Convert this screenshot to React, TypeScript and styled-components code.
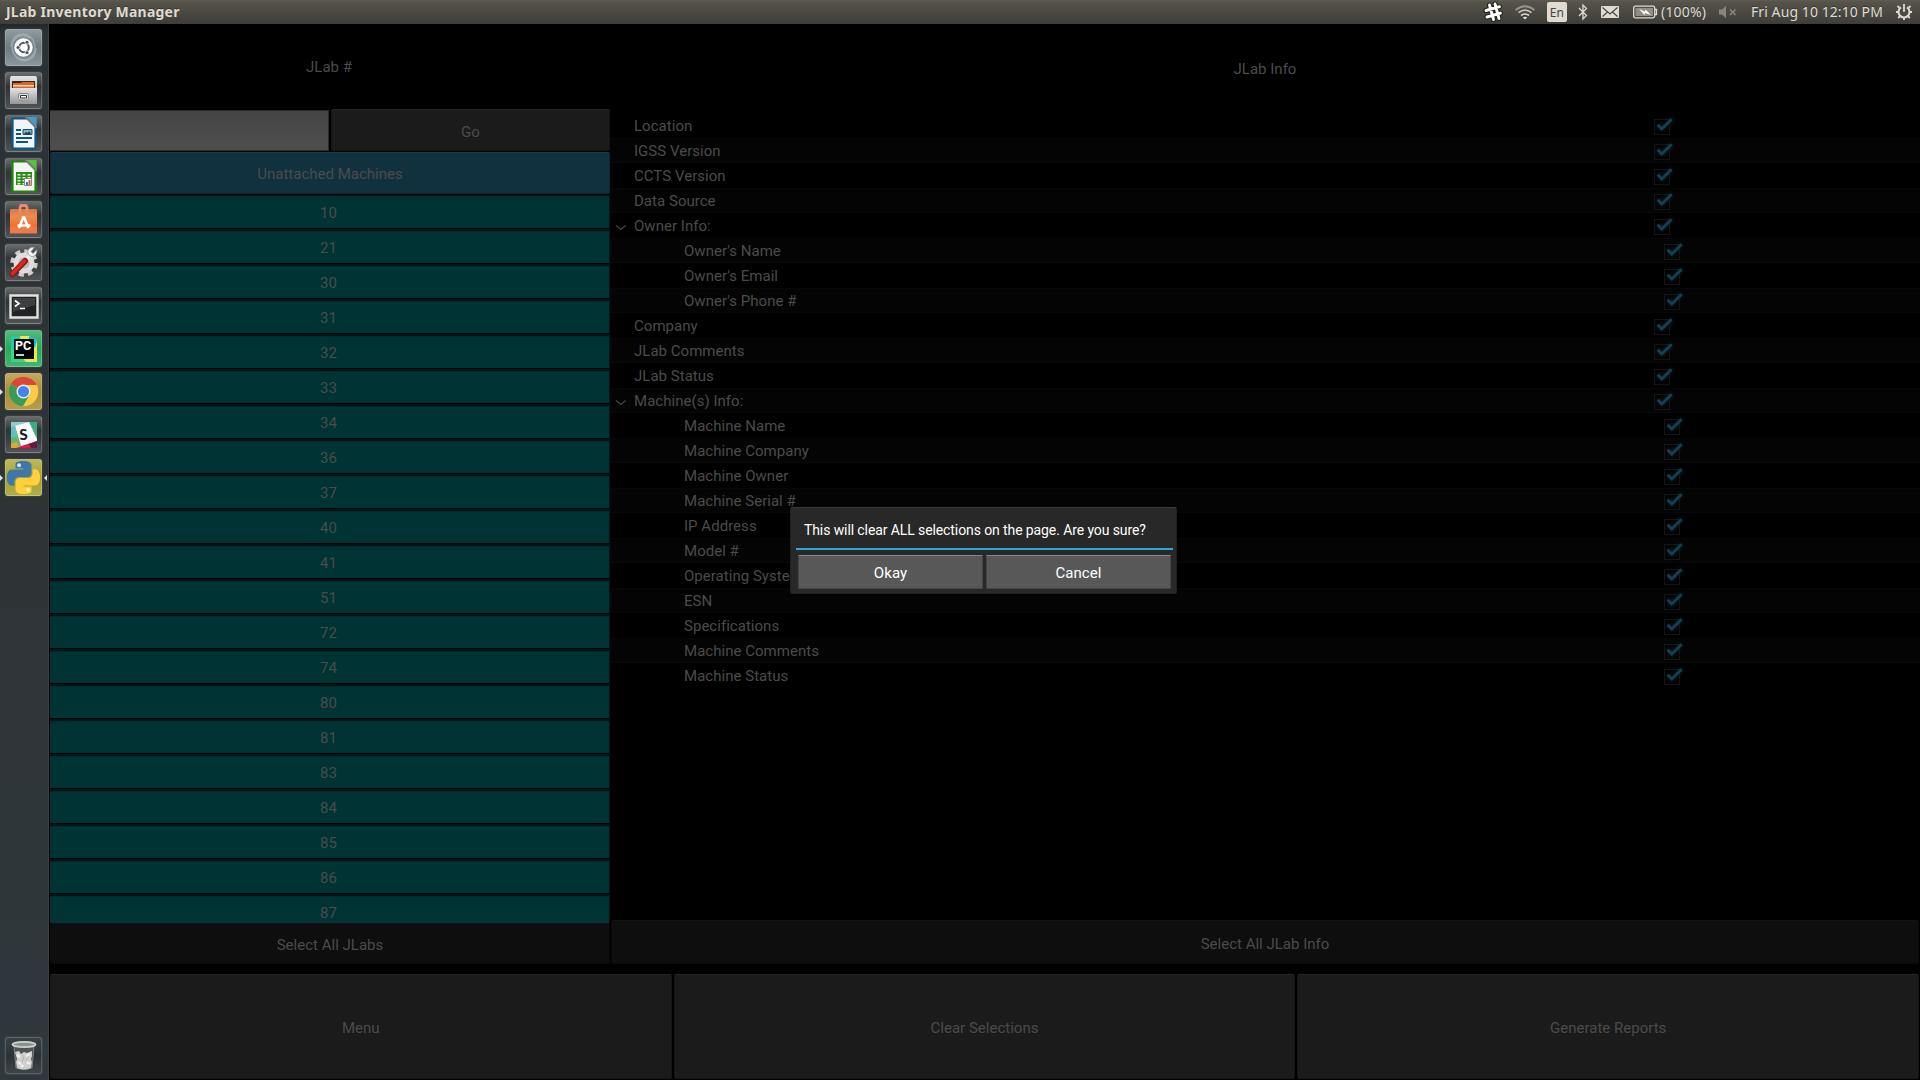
import React from "react";
import styled, { createGlobalStyle } from "styled-components";

const GlobalStyle = createGlobalStyle`
  * { box-sizing: border-box; }
  html, body { margin: 0; background: #000; overflow: hidden; }
`;

const Screen = styled.div`
  position: relative;
  width: 1920px;
  height: 1080px;
  display: flex;
  flex-direction: column;
  overflow: hidden;
  background: #000;
  color: #4b4b4b;
  font: 15px/20px Roboto, "Liberation Sans", sans-serif;
  letter-spacing: 0.01px;
`;

const TopBar = styled.header`
  height: 24px;
  flex: none;
  display: flex;
  align-items: center;
  padding: 0 8px 0 6px;
  background: linear-gradient(#5f5d51 0, #55534a 2px, #3e3d38 100%);
  color: #dfdbd2;
  font-family: "Noto Sans", "Open Sans", sans-serif;
  text-shadow: 0 -1px 0 rgba(0, 0, 0, 0.3);
`;

const WindowTitle = styled.div`
  width: 300px;
  margin-right: auto;
  font-size: 14px;
  font-weight: 700;
  letter-spacing: 0.23px;
  white-space: nowrap;
`;

const Indicator = styled.div<{ $w: number; $gap?: number }>`
  width: ${(p) => p.$w}px;
  margin-right: ${(p) => p.$gap ?? 0}px;
  height: 24px;
  display: flex;
  align-items: center;
  white-space: nowrap;
  font-size: 14px;
  letter-spacing: ${(p) => (p.$w > 100 ? "0.08px" : "0.2px")};
  svg { display: block; flex: none; }
`;

const LangBox = styled.span`
  width: 20px;
  height: 20px;
  border-radius: 2px;
  background: #dfdbd2;
  color: #45443e;
  text-shadow: none;
  font-size: 12px;
  line-height: 21px;
  text-align: center;
`;

const Main = styled.div`
  flex: 1;
  min-height: 0;
  display: flex;
`;

const Dock = styled.nav`
  width: 49px;
  flex: none;
  margin-right: 1px;
  display: flex;
  flex-direction: column;
  align-items: center;
  gap: 5px;
  padding: 5px 1px 5px 0;
  border-right: 1px solid #3b4043;
  background: linear-gradient(#22272a 0, #2c3134 8px, #2e3336 50%, #2f383d 100%);
`;

const DockSlot = styled.div<{ $last?: boolean }>`
  width: 47px;
  height: 38px;
  padding-bottom: 1px;
  flex: none;
  display: flex;
  align-items: center;
  justify-content: space-between;
  margin-top: ${(p) => (p.$last ? "auto" : "0")};
`;

const Pip = styled.span<{ $side: "left" | "right"; $on?: boolean }>`
  width: 4px;
  height: 0;
  border: 3px solid transparent;
  border-${(p) => (p.$side === "left" ? "left" : "right")}-color: ${(p) => (p.$on ? "#dfe2e3" : "transparent")};
  border-${(p) => (p.$side === "left" ? "right" : "left")}-width: 0;
`;

const Tile = styled.div<{ $bg?: string }>`
  width: 37px;
  height: 37px;
  border-radius: 3px;
  border: 1px solid rgba(255, 255, 255, 0.17);
  box-shadow: 0 0 1px 1px rgba(120, 135, 145, 0.16);
  background: ${(p) => p.$bg ?? "linear-gradient(#686b6c, #303436 38%, #3b3f42 65%, #505456)"};
  display: flex;
  align-items: center;
  justify-content: center;
  svg { display: block; flex: none; }
`;

const AppArea = styled.main`
  flex: 1;
  min-width: 0;
  display: flex;
  flex-direction: column;
`;

const Panels = styled.div`
  height: 940px;
  display: flex;
`;

const LabColumn = styled.section`
  width: 560px;
  flex: none;
  display: flex;
  flex-direction: column;
`;

const PanelTitle = styled.h2<{ $h: number }>`
  height: ${(p) => p.$h}px;
  flex: none;
  margin: 0;
  font: inherit;
  text-align: center;
  line-height: ${(p) => p.$h + 1}px;
  padding-right: ${(p) => (p.$h > 86 ? 0 : 2)}px;
`;

const SearchRow = styled.div`
  height: 43px;
  flex: none;
  display: flex;
  gap: 2px;
  padding-bottom: 1px;
`;

const SearchInput = styled.input`
  flex: none;
  width: 279px;
  height: 41px;
  margin-top: 1px;
  border: 1px solid #2c2c2c;
  border-left: 0;
  border-radius: 0 1px 1px 0;
  outline: 0;
  background: linear-gradient(#454545, #4e4e4e);
  color: #aaa;
`;

const Button = styled.button<{ $tone?: "normal" | "dim" | "blue"; $drop?: number }>`
  flex: 1;
  min-width: 0;
  padding: ${(p) => p.$drop ?? 2}px 0 0;
  border: 1px solid ${(p) => (p.$tone === "dim" ? "#0a0a0a" : p.$tone === "blue" ? "#0d2632" : "#151515")};
  border-top-color: ${(p) => (p.$tone === "dim" ? "#131313" : p.$tone === "blue" ? "#1b3947" : "#262626")};
  border-radius: 2px;
  background: ${(p) => (p.$tone === "dim" ? "#0e0e0e" : p.$tone === "blue" ? "#12313f" : "#1b1b1b")};
  color: inherit;
  font: inherit;
  letter-spacing: inherit;
`;

const UnattachedRow = styled.div`
  height: 42px;
  flex: none;
  display: flex;
`;

const LabList = styled.div`
  height: 729px;
  flex: none;
  overflow: hidden;
  padding-top: 1px;
`;

const LabItem = styled.div`
  height: 35px;
  border: 1px solid #001616;
  border-left: 0;
  background: #003333;
  box-shadow: inset 0 -1px #000, inset 0 1px #002b2b;
  text-align: center;
  line-height: 35px;
  padding-right: 2px;
`;

const SelectRow = styled.div`
  height: 41px;
  flex: none;
  display: flex;
`;

const InfoColumn = styled.section`
  flex: 1;
  display: flex;
  flex-direction: column;
`;

const Tree = styled.ul`
  height: 807px;
  flex: none;
  margin: 0;
  padding: 0;
  list-style: none;
`;

const TreeRow = styled.li<{ $nested?: boolean }>`
  height: 25px;
  display: grid;
  grid-template-columns: ${(p) => (p.$nested ? "74px 980px 20px" : "24px 1020px 20px")};
  align-items: center;
  &:nth-child(even) { background: #040404; box-shadow: inset 0 1px #070707, inset 0 -1px #070707; }
  svg { display: block; }
`;

const TreeLabel = styled.span`
  padding-top: 1px;
  letter-spacing: 0.03px;
`;

const CheckBox = styled.span`
  width: 16px;
  height: 16px;
  margin-top: 3px;
  border: 1px solid #151515;
  svg { margin: -5px 0 0 -4px; filter: drop-shadow(0 0 2px #0c2835); }
`;

const InfoFooter = styled.div`
  height: 44px;
  margin-left: 1px;
  display: flex;
  padding-right: 1px;
`;

const Footer = styled.footer`
  height: 105px;
  margin-top: 10px;
  display: flex;
  gap: 2px;
  padding-right: 1px;
`;

const Dialog = styled.div`
  position: absolute;
  left: 790px;
  top: 507px;
  width: 387px;
  height: 87px;
  display: flex;
  flex-direction: column;
  border-radius: 2px;
  border: 1px solid #1f1f1f;
  border-top-color: #3a3a3a;
  background: #282828;
  color: #fff;
`;

const DialogTitle = styled.div`
  height: 42px;
  flex: none;
  margin: 0 3px 0 5px;
  padding: 11px 0 0 8px;
  border-bottom: 2px solid #2fa7d4;
  font-size: 14px;
  line-height: 22px;
  letter-spacing: -0.1px;
  white-space: nowrap;
`;

const DialogActions = styled.div`
  display: flex;
  gap: 3px;
  padding: 5px 5px 0 7px;
`;

const DialogButton = styled.button`
  flex: 1;
  height: 34px;
  padding: 2px 0 0;
  border: 1px solid #454545;
  border-top-color: #868686;
  border-radius: 1px;
  background: #585858;
  color: #fff;
  font: inherit;
  letter-spacing: 0.05px;
`;

const labs = [10, 21, 30, 31, 32, 33, 34, 36, 37, 40, 41, 51, 72, 74, 80, 81, 83, 84, 85, 86, 87];

type Node = { label: string; nested?: boolean; open?: boolean };
const n = (label: string): Node => ({ label, nested: true });
const tree: Node[] = [
  { label: "Location" },
  { label: "IGSS Version" },
  { label: "CCTS Version" },
  { label: "Data Source" },
  { label: "Owner Info:", open: true },
  n("Owner's Name"),
  n("Owner's Email"),
  n("Owner's Phone #"),
  { label: "Company" },
  { label: "JLab Comments" },
  { label: "JLab Status" },
  { label: "Machine(s) Info:", open: true },
  n("Machine Name"),
  n("Machine Company"),
  n("Machine Owner"),
  n("Machine Serial #"),
  n("IP Address"),
  n("Model #"),
  n("Operating System"),
  n("ESN"),
  n("Specifications"),
  n("Machine Comments"),
  n("Machine Status"),
];

const Check = () => (
  <svg width="24" height="20" viewBox="0 0 24 20">
    <path d="M6.600 9.800l4.200 4.200L20.600 4.300" fill="none" stroke="#153f52" strokeWidth="2.900" />
  </svg>
);

const Chevron = () => (
  <svg width="24" height="16" viewBox="0 0 24 16">
    <path d="M6 7.500l4.800 4 4.800-4" fill="none" stroke="#454545" strokeWidth="1.200" />
  </svg>
);

/* ---------- launcher icons ---------- */

const Ubuntu = () => (
  <svg width="35" height="35" viewBox="0 0 35 35">
    <g fill="none" stroke="#bcc5c8" strokeWidth="1.6" opacity=".5">
      <path d="M8 24C1 11 14 0 24 8M27 11c7 13-6 24-16 16M5 17C6 3 20 0 28 11M30 18c-1 14-15 17-22 6" />
    </g>
    <circle cx="17.500" cy="17.500" r="9.200" fill="#fff" />
    <circle cx="18" cy="17.500" r="4.800" fill="none" stroke="#4d565a" strokeWidth="2" />
    <g fill="#4d565a" stroke="#fff" strokeWidth=".8">
      <circle cx="12" cy="17.500" r="2" />
      <circle cx="21" cy="12.300" r="2" />
      <circle cx="21" cy="22.700" r="2" />
    </g>
  </svg>
);

const Files = () => (
  <svg width="35" height="35" viewBox="0 0 35 35">
    <defs>
      <linearGradient id="cab" x2="0" y2="1"><stop stopColor="#e4e4e4" /><stop offset="1" stopColor="#969696" /></linearGradient>
    </defs>
    <path d="M5 3h25l1 2v26H4V5z" fill="url(#cab)" />
    <path d="M6 8h23v8H6z" fill="#3a2620" />
    <path d="M7 10h8l1-1h12v7H7z" fill="#d9652c" />
    <path d="M7 12h21v1.500H7z" fill="#f8d7a8" />
    <path d="M4 15h27v16H4z" fill="url(#cab)" />
    <rect x="12.500" y="20.500" width="10" height="6.500" rx="1.500" fill="#ddd" stroke="#888" />
    <path d="M14.500 22.500h6v2.500h-6z" fill="#fff" stroke="#333" />
  </svg>
);

const Doc = ({ dark, light, children }: { dark: string; light: string; children: React.ReactNode }) => (
  <svg width="35" height="35" viewBox="0 0 35 35">
    <path d="M6.500 2.500h16l7 8v22h-23z" fill="#f4f4f4" stroke={dark} strokeWidth="2.200" strokeLinejoin="round" />
    <path d="M20 1h10.600v11z" fill={light} />
    <path d="M19.500 1l11 11" stroke="#777" strokeWidth="2" />
    {children}
  </svg>
);

const Writer = () => (
  <Doc dark="#07558a" light="#3e9bd4">
    <path d="M10 14h5M10 18h5M10 22h16M10 26h12" stroke="#075589" strokeWidth="2" />
    <path d="M17 13.500h9v5h-9z" fill="#67b6e5" stroke="#174d77" />
    <path d="M18 18l2-2 2 1 1-2 2 3z" fill="#333" />
  </Doc>
);

const Calc = () => (
  <Doc dark="#23850b" light="#54c33a">
    <path d="M10 13h16v13H10z" fill="#2a8c18" />
    <path d="M11.500 15h3v1.500h-3zm5 0h3v1.500h-3zm5 0h3v1.500h-3zm-10 3h3v1.500h-3zm5 0h3v1.500h-3zm5 0h3v1.500h-3zm-10 3h3v1.500h-3zm5 0h3v1.500h-3zm-5 3h3v1.500h-3zm5 0h2v1.500h-2z" fill="#e5f3df" />
    <path d="M18.500 19.500h7v7h-7z" fill="#fff" stroke="#888" />
    <path d="M20 23h2v3h-2z" fill="#1788cf" />
    <path d="M22.500 21h2v5h-2z" fill="#e6552a" />
  </Doc>
);

const Store = () => (
  <svg width="35" height="35" viewBox="0 0 35 35">
    <defs><linearGradient id="bag" x2="0" y2="1"><stop stopColor="#d9744c" /><stop offset=".3" stopColor="#ec8b50" /><stop offset=".7" stopColor="#f1702d" /><stop offset=".75" stopColor="#ee7b45" /></linearGradient></defs>
    <path d="M4 8l1-1h25l1 1v23.500H4z" fill="url(#bag)" />
    <path d="M14 11V5.500l1-2h5l1 2V11" fill="none" stroke="#ee8a68" strokeWidth="2.800" />
    <path d="M13 26l4.200-10.500h1L22.400 26M11.500 23.500h13" fill="none" stroke="#fff" strokeWidth="2.600" />
  </svg>
);

const Settings = () => (
  <svg width="35" height="35" viewBox="0 0 35 35">
    <circle cx="18" cy="18" r="11.500" fill="none" stroke="#cfcfcf" strokeWidth="4.500" strokeDasharray="5.030 4" />
    <circle cx="18" cy="18" r="8" fill="#b9b9b9" stroke="#dedede" strokeWidth="5" />
    <path d="M17 19l8-9" stroke="#eee" strokeWidth="4" />
    <path d="M31 4.500l-4 4-2-2 3.500-4c-5-1-8 3-6 7 3 4 9 2 8.500-5z" fill="#f3f3f3" stroke="#888" strokeWidth=".7" />
    <path d="M6.500 29L19 16" stroke="#8d1412" strokeWidth="6" strokeLinecap="round" />
    <path d="M6.500 28.500L18.500 16" stroke="#d62a20" strokeWidth="3.700" strokeLinecap="round" />
  </svg>
);

const Terminal = () => (
  <svg width="35" height="35" viewBox="0 0 35 35">
    <path d="M4.500 7.500h27v22h-27z" fill="#202323" stroke="#e2e2e2" strokeWidth="2.400" />
    <path d="M7 10h22v7L7 24z" fill="#3b3f3f" />
    <path d="M9 12.500l4 3-4 3M14 20.500h5" fill="none" stroke="#fff" strokeWidth="1.700" />
  </svg>
);

const PyCharm = () => (
  <svg width="35" height="35" viewBox="0 0 35 35">
    <path d="M5 5h18l8 4v22H5z" fill="#1bcfa0" />
    <path d="M14 5h9l8 4v22H18z" fill="#e9e84c" />
    <path d="M23 5l4 1 4 3-2 8-6-7z" fill="#16b9df" />
    <path d="M5 16v15h15z" fill="#35d982" />
    <path d="M8 8h20v20H8z" fill="#050505" />
    <text x="9" y="18.500" fill="#fff" fontFamily="Roboto, sans-serif" fontWeight="700" fontSize="12.500" letterSpacing="0">PC</text>
    <path d="M10 24h8" stroke="#fff" strokeWidth="1.600" />
  </svg>
);

const Chrome = () => (
  <svg width="35" height="35" viewBox="0 0 35 35">
    <circle cx="17.500" cy="17.500" r="14.800" fill="#fbcb45" />
    <path d="M17.500 17.500L4.700 10.100A14.800 14.800 0 0 1 30.800 11H17.500z" fill="#dc4739" />
    <path d="M4.700 10.100A14.800 14.800 0 0 0 17 32.300l6.400-11.400-5.900-3.400z" fill="#3b9a55" />
    <circle cx="17.500" cy="17.500" r="7" fill="#f2f0e6" />
    <circle cx="17.500" cy="17.500" r="5.600" fill="#4283ee" />
  </svg>
);

const Slack = () => (
  <svg width="35" height="35" viewBox="0 0 35 35">
    <path d="M5 5h26v26H5z" fill="#fff" />
    <path d="M5 5h18L5 10z" fill="#8ccdc9" />
    <path d="M23 5h8v17z" fill="#39ad83" />
    <path d="M5 10l4-1 6 20-6 2H5z" fill="#69b56e" />
    <path d="M5 10l4-1 3 10-7 2z" fill="#63bfc2" />
    <path d="M9 31l22-7v7z" fill="#df174b" />
    <path d="M5 27l6-2 2 5-4 1H5z" fill="#e2a82d" />
    <path d="M23 27l8-3v7h-6z" fill="#641b3b" />
    <text x="13.500" y="23" fill="#1d1d1d" fontFamily="Lato, sans-serif" fontWeight="900" fontSize="15" letterSpacing="0" transform="rotate(-4 18 18)">S</text>
  </svg>
);

const pyHalf =
  "M14.25.18l.9.2.73.26.59.3.45.32.34.34.25.34.16.33.1.3.04.26.02.2-.01.13V8.5l-.05.63-.13.55-.21.46-.26.38-.3.31-.33.25-.35.19-.35.14-.33.1-.3.07-.26.04-.21.02H8.77l-.69.05-.59.14-.5.22-.41.27-.33.32-.27.35-.2.36-.15.37-.1.35-.07.32-.04.27-.02.21v3.06H3.17l-.21-.03-.28-.07-.32-.12-.35-.18-.36-.26-.36-.36-.35-.46-.32-.59-.28-.73-.21-.88-.14-1.05-.05-1.23.06-1.22.16-1.04.24-.87.32-.71.36-.57.4-.44.42-.33.42-.24.4-.16.36-.1.32-.05.24-.01h.16l.06.01h8.16v-.83H6.18l-.01-2.75-.02-.37.05-.34.11-.31.17-.28.25-.26.31-.23.38-.2.44-.18.51-.15.58-.12.64-.1.71-.06.77-.04.84-.02 1.27.05z";

const Python = () => (
  <svg width="33" height="33" viewBox="0 0 24 24">
    <path d={pyHalf} fill="#3c78a9" />
    <path d={pyHalf} fill="#ffd03c" transform="rotate(180 12 12)" />
    <circle cx="8.800" cy="3.100" r="1.400" fill="#dce8f0" />
    <circle cx="15.200" cy="20.900" r="1.400" fill="#fff3bd" />
  </svg>
);

const Trash = () => (
  <svg width="35" height="35" viewBox="0 0 35 35">
    <path d="M8 8h20l-2 22q-8 3-16 0z" fill="#4e5457" stroke="#7c8284" />
    <path d="M9 14l4-1 2 3 3-2 3 1 5-2v5l-1 3 1 3-1 6q-7 3-14 0l-1-6 1-3z" fill="#cfd0ce" />
    <path d="M11 17l3 2M20 18l4-2M12 24l3 2M21 24l3 2M15 29l2-2" fill="none" stroke="#f0f0ee" strokeWidth="2.500" />
    <path d="M16 17l2 3-2 4M22 20l-2 3" fill="none" stroke="#b4b6b4" strokeWidth="1" />
    <ellipse cx="18" cy="6.500" rx="11.500" ry="2.600" fill="#8b908e" stroke="#cfd3cf" strokeWidth="1.800" />
  </svg>
);

type App = { icon: () => React.JSX.Element; bg?: string; running?: boolean; focused?: boolean };
const launcher: App[] = [
  { icon: Ubuntu, bg: "linear-gradient(#8f9b9f,#6e7c82 50%,#89969c)" },
  { icon: Files },
  { icon: Writer },
  { icon: Calc },
  { icon: Store },
  { icon: Settings },
  { icon: Terminal },
  { icon: PyCharm, bg: "linear-gradient(#55ba7a,#2ca65e 50%,#43b572)", running: true },
  { icon: Chrome, bg: "linear-gradient(#c2a95f,#a58d3b 50%,#b59d4e)", running: true },
  { icon: Slack },
  { icon: Python, bg: "linear-gradient(#bdb95b,#a3a036 50%,#b0ad46)", running: true, focused: true },
];

/* ---------- status indicators ---------- */

const SlackTray = () => (
  <svg width="20" height="22" viewBox="0 0 20 22">
    <g fill="none" strokeLinecap="round">
      <path d="M6.500 4l4 14.500M12 3l4 14.500M3 9.500l13.500-3.800M4 16l13.500-3.800" stroke="#1f1f1c" strokeWidth="5" />
      <path d="M6.500 4l4 14.500M12 3l4 14.500M3 9.500l13.500-3.800M4 16l13.500-3.800" stroke="#fff" strokeWidth="2.900" />
    </g>
  </svg>
);
const Wifi = () => (
  <svg width="20" height="16" viewBox="0 0 20 16">
    <g fill="none" strokeWidth="1.700">
      <path d="M.5 6q9.500-7.500 19 0" stroke="#97948b" />
      <path d="M3.500 8.700q6.500-5 13 0" stroke="#c8c5bc" />
      <path d="M6 11.500q4-3 8 0" stroke="#dfdbd2" />
    </g>
    <path d="M7.800 13.500q2.200-1.600 4.400 0L10 15.500z" fill="#dfdbd2" />
  </svg>
);
const Bluetooth = () => (
  <svg width="10" height="18" viewBox="0 0 10 18">
    <path d="M1 5l7.500 7.500L5 16V2l3.500 3.500L1 13" fill="none" stroke="#dfdbd2" strokeWidth="1.300" />
  </svg>
);
const Mail = () => (
  <svg width="18" height="12" viewBox="0 0 18 12">
    <rect width="18" height="12" rx="1" fill="#dfdbd2" />
    <path d="M1.500 1.500L9 8l7.500-6.500M1.500 10.500l5-4.500M16.500 10.500l-5-4.500" fill="none" stroke="#4a4943" strokeWidth="1.200" />
  </svg>
);
const Battery = () => (
  <svg width="25" height="14" viewBox="0 0 25 14">
    <rect x=".7" y="1.200" width="21" height="11.600" rx="1.800" fill="none" stroke="#dfdbd2" strokeWidth="1.300" />
    <path d="M22 4.500h1.500v5H22" fill="none" stroke="#dfdbd2" strokeWidth="1.300" />
    <path d="M2.500 3h17.500v8H2.500z" fill="#8f8d84" />
    <path d="M6 4l6 2.500.5-2L18 10l-6-2-.5 2z" fill="#fff" />
  </svg>
);
const Muted = () => (
  <svg width="18" height="12" viewBox="0 0 18 12">
    <path d="M0 3.500h3L7 0v12L3 8.500H0z" fill="#88867e" />
    <path d="M11 3.500l5.500 5.500M16.500 3.500L11 9" stroke="#88867e" strokeWidth="1.600" />
  </svg>
);
const Power = () => (
  <svg width="18" height="18" viewBox="0 0 18 18">
    <path d="M6 4.300a5.500 5.500 0 1 0 6 0" fill="none" stroke="#dfdbd2" strokeWidth="2" />
    <path d="M9 1v8" stroke="#dfdbd2" strokeWidth="1.800" />
    <path d="M2.500 3l2 1.800M15.500 3l-2 1.800M1 9h2.500M14.500 9H17M3.200 15l2-2M14.800 15l-2-2M9 14.500V17" stroke="#dfdbd2" strokeWidth="1.800" />
  </svg>
);

export default function App() {
  return (
    <Screen>
      <GlobalStyle />
      <TopBar>
        <WindowTitle>JLab Inventory Manager</WindowTitle>
        <Indicator $w={20} $gap={12}><SlackTray /></Indicator>
        <Indicator $w={20} $gap={12}><Wifi /></Indicator>
        <Indicator $w={20} $gap={11}><LangBox>En</LangBox></Indicator>
        <Indicator $w={10} $gap={13}><Bluetooth /></Indicator>
        <Indicator $w={18} $gap={14}><Mail /></Indicator>
        <Indicator $w={28}><Battery /></Indicator>
        <Indicator $w={47} $gap={11}>(100%)</Indicator>
        <Indicator $w={18} $gap={14}><Muted /></Indicator>
        <Indicator $w={133} $gap={11}>Fri Aug 10 12:10 PM</Indicator>
        <Indicator $w={17}><Power /></Indicator>
      </TopBar>
      <Main>
        <Dock>
          {launcher.map(({ icon: Icon, bg, running, focused }, i) => (
            <DockSlot key={i}>
              <Pip $side="left" $on={running} />
              <Tile $bg={bg}><Icon /></Tile>
              <Pip $side="right" $on={focused} />
            </DockSlot>
          ))}
          <DockSlot $last>
            <Pip $side="left" />
            <Tile $bg="linear-gradient(#3c4346,#2b3235 50%,#3d4548)"><Trash /></Tile>
            <Pip $side="right" />
          </DockSlot>
        </Dock>
        <AppArea>
          <Panels>
            <LabColumn>
              <PanelTitle $h={85}>JLab #</PanelTitle>
              <SearchRow>
                <SearchInput />
                <Button $drop={3}>Go</Button>
              </SearchRow>
              <UnattachedRow><Button $tone="blue">Unattached Machines</Button></UnattachedRow>
              <LabList>
                {labs.map((lab) => <LabItem key={lab}>{lab}</LabItem>)}
              </LabList>
              <SelectRow><Button $tone="dim" $drop={3}>Select All JLabs</Button></SelectRow>
            </LabColumn>
            <InfoColumn>
              <PanelTitle $h={89}>JLab Info</PanelTitle>
              <Tree>
                {tree.map(({ label, nested, open }) => (
                  <TreeRow key={label} $nested={nested}>
                    <span>{open && <Chevron />}</span>
                    <TreeLabel>{label}</TreeLabel>
                    <CheckBox><Check /></CheckBox>
                  </TreeRow>
                ))}
              </Tree>
              <InfoFooter><Button $tone="dim" $drop={4}>Select All JLab Info</Button></InfoFooter>
            </InfoColumn>
          </Panels>
          <Footer>
            <Button $drop={3}>Menu</Button>
            <Button $drop={3}>Clear Selections</Button>
            <Button $drop={3}>Generate Reports</Button>
          </Footer>
        </AppArea>
      </Main>
      <Dialog>
        <DialogTitle>This will clear ALL selections on the page. Are you sure?</DialogTitle>
        <DialogActions>
          <DialogButton>Okay</DialogButton>
          <DialogButton>Cancel</DialogButton>
        </DialogActions>
      </Dialog>
    </Screen>
  );
}
